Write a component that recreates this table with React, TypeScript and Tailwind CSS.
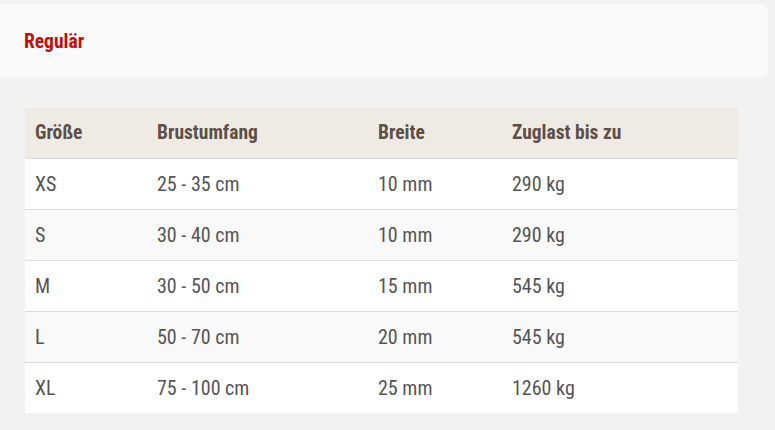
import React from 'react';

const rows = [
  { size: 'XS', chest: '25 - 35 cm', width: '10 mm', load: '290 kg' },
  { size: 'S', chest: '30 - 40 cm', width: '10 mm', load: '290 kg' },
  { size: 'M', chest: '30 - 50 cm', width: '15 mm', load: '545 kg' },
  { size: 'L', chest: '50 - 70 cm', width: '20 mm', load: '545 kg' },
  { size: 'XL', chest: '75 - 100 cm', width: '25 mm', load: '1260 kg' },
];

export default function App() {
  return (
    <div
      className="min-h-screen w-full bg-[#f2f2f2] pt-1 overflow-hidden"
      style={{ fontFamily: 'Roboto, "Liberation Sans", sans-serif', fontStretch: 'condensed' }}
    >
      {/* Titel */}
      <div className="-ml-2 w-[776px] h-[73px] rounded-lg bg-[#fafafa] flex items-center pl-8 pt-[2px]">
        <h2 className="text-[19.5px] font-bold text-[#c20e0e]">Regulär</h2>
      </div>

      {/* Größentabelle */}
      <div className="pl-[25px] pt-[31px]">
        <table className="w-[713px] border-collapse text-[20px] text-[#555]">
          <thead>
            <tr className="h-[50px] bg-[#efebe4] border-b border-[#dcdcdc] text-[19.5px]">
              <th className="w-[122px] pl-[10px] text-left font-bold text-[#5c5048]">Größe</th>
              <th className="w-[221px] pl-[10px] text-left font-bold text-[#5c5048]">Brustumfang</th>
              <th className="w-[134px] pl-[10px] text-left font-bold text-[#5c5048]">Breite</th>
              <th className="pl-[10px] text-left font-bold text-[#5c5048]">Zuglast bis zu</th>
            </tr>
          </thead>
          <tbody>
            {rows.map((row, i) => (
              <tr
                key={row.size}
                className={`h-[51px] ${i % 2 === 1 ? 'bg-[#f9f9f9]' : 'bg-white'} ${
                  i < rows.length - 1 ? 'border-b border-[#dcdcdc]' : ''
                }`}
              >
                <td className="pl-[10px]">{row.size}</td>
                <td className="pl-[10px]">{row.chest}</td>
                <td className="pl-[10px]">{row.width}</td>
                <td className="pl-[10px]">{row.load}</td>
              </tr>
            ))}
          </tbody>
        </table>
      </div>
    </div>
  );
}
